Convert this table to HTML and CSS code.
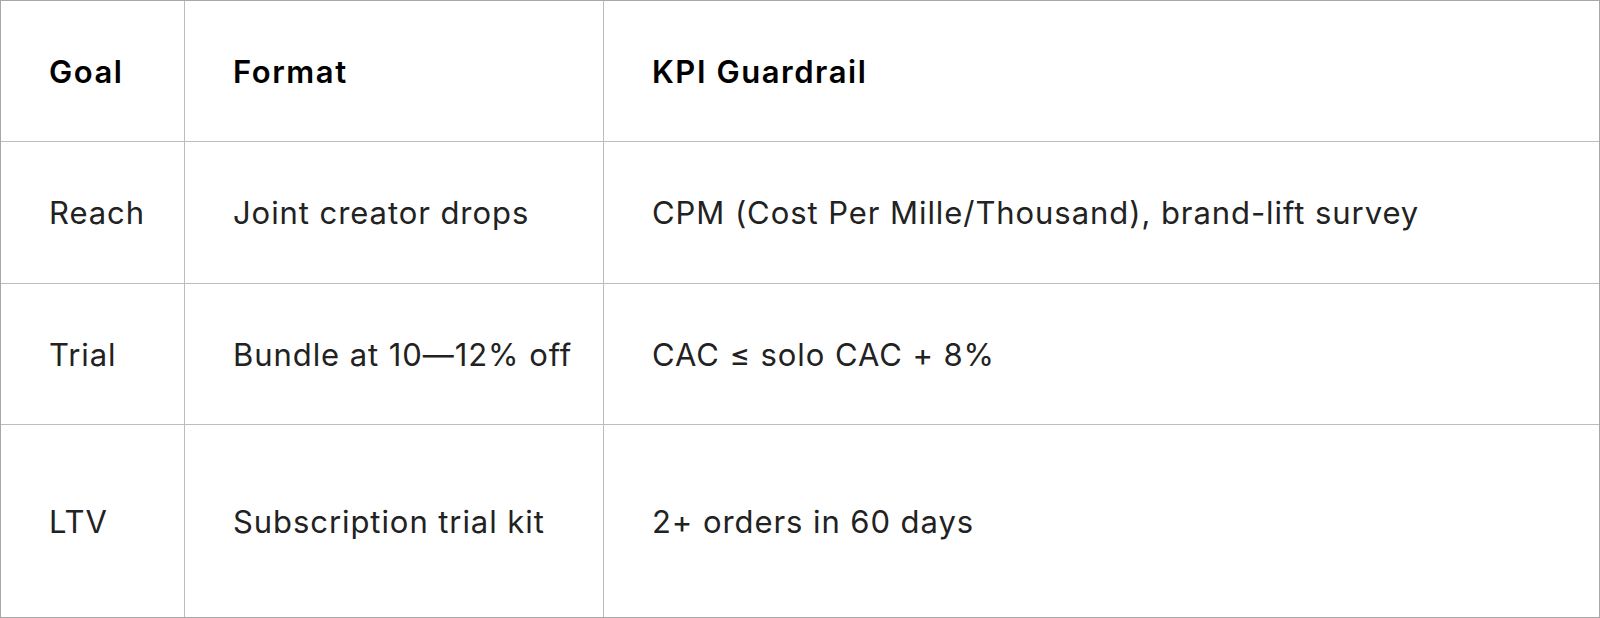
FILE: index.html
```html
<!DOCTYPE html>
<html lang="en">
<head>
<meta charset="utf-8">
<title>Co-marketing KPI table</title>
<link rel="stylesheet" href="styles.css">
</head>
<body>
<div class="frame">
  <div class="grid">
    <div class="cell head">Goal</div>
    <div class="cell head">Format</div>
    <div class="cell head">KPI Guardrail</div>

    <div class="cell">Reach</div>
    <div class="cell">Joint creator drops</div>
    <div class="cell">CPM (Cost Per Mille/Thousand), brand-lift survey</div>

    <div class="cell">Trial</div>
    <div class="cell">Bundle at 10—12% off</div>
    <div class="cell">CAC ≤ solo CAC + 8%</div>

    <div class="cell">LTV</div>
    <div class="cell">Subscription trial kit</div>
    <div class="cell">2+ orders in 60 days</div>
  </div>
</div>
</body>
</html>
```

FILE: styles.css
```css
html, body {
  margin: 0;
  padding: 0;
  background: #ffffff;
}

.frame {
  width: 1600px;
  height: 618px;
  box-sizing: border-box;
  border: 1px solid #a8a8a8;
}

.grid {
  display: grid;
  grid-template-columns: 183px 418px 1fr;
  grid-template-rows: 140px 141px 140px 1fr;
  gap: 1px;
  height: 100%;
  background: #bdbdbd;
  font-family: "Inter", "Noto Sans", sans-serif;
  font-size: 31px;
  letter-spacing: 0.03em;
  color: #222222;
}

.cell {
  background: #ffffff;
  display: flex;
  align-items: center;
  padding: 0 0 0 48px;
  white-space: nowrap;
}

.head {
  font-weight: 600;
  letter-spacing: 0.05em;
  color: #000000;
}
```
